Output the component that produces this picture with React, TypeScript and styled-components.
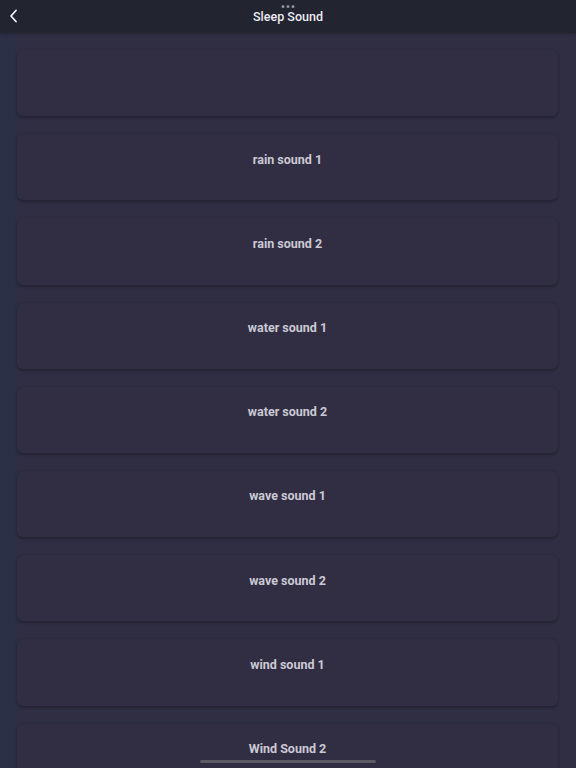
import styled, { createGlobalStyle } from "styled-components";

const GlobalStyle = createGlobalStyle`
  html, body {
    margin: 0;
    padding: 0;
    background: #302e42;
    font-family: Roboto, "Liberation Sans", sans-serif;
  }
`;

const Page = styled.div`
  width: 576px;
  height: 768px;
  overflow: hidden;
  position: relative;
  background: linear-gradient(90deg, #2a3046 0px, #2d2f45 14px, #302e42 22px);
`;

const Header = styled.div`
  height: 33px;
  background: #22242f;
  display: flex;
  align-items: center;
  justify-content: center;
  position: relative;
  box-shadow: 0 1px 3px rgba(0, 0, 0, 0.25);
`;

const BackButton = styled.button`
  position: absolute;
  left: 6px;
  top: 8px;
  width: 16px;
  height: 16px;
  padding: 0;
  border: none;
  background: none;
  display: flex;
  align-items: center;
  justify-content: center;
`;

const Title = styled.div`
  color: #eceaf2;
  font-size: 12.5px;
  font-weight: 500;
`;

const Grabber = styled.div`
  position: absolute;
  top: 5px;
  left: 50%;
  transform: translateX(-50%);
  display: flex;
  gap: 2px;

  span {
    width: 3px;
    height: 3px;
    border-radius: 50%;
    background: #8d8d98;
  }
`;

const List = styled.div`
  display: flex;
  flex-direction: column;
  gap: 18px;
  padding: 17px 18px 0 17px;
`;

const Card = styled.div`
  height: 66.2px;
  border-radius: 6px;
  background: #312e44;
  box-shadow: 0 2px 3px rgba(0, 0, 0, 0.22), 0 0 2px rgba(0, 0, 0, 0.15);
  display: flex;
  justify-content: center;
  padding-top: 17.5px;
  box-sizing: border-box;
  flex-shrink: 0;
`;

const Label = styled.div`
  color: #cbc9d3;
  font-size: 12.5px;
  font-weight: 700;
`;

const HomeBar = styled.div`
  position: absolute;
  bottom: 5px;
  left: 200px;
  width: 176px;
  height: 3px;
  border-radius: 2px;
  background: #5b5a66;
`;

const sounds = [
  "",
  "rain sound 1",
  "rain sound 2",
  "water sound 1",
  "water sound 2",
  "wave sound 1",
  "wave sound 2",
  "wind sound 1",
  "Wind Sound 2",
];

export default function App() {
  return (
    <Page>
      <GlobalStyle />
      <Header>
        <Grabber>
          <span />
          <span />
          <span />
        </Grabber>
        <BackButton>
          <svg width="10" height="14" viewBox="0 0 10 14">
            <path
              d="M7 1.5 L2 7 L7 12.5"
              fill="none"
              stroke="#f2f2f6"
              strokeWidth="1.8"
              strokeLinecap="round"
              strokeLinejoin="round"
            />
          </svg>
        </BackButton>
        <Title>Sleep Sound</Title>
      </Header>
      <List>
        {sounds.map((s, i) => (
          <Card key={i}>
            <Label>{s}</Label>
          </Card>
        ))}
      </List>
      <HomeBar />
    </Page>
  );
}
